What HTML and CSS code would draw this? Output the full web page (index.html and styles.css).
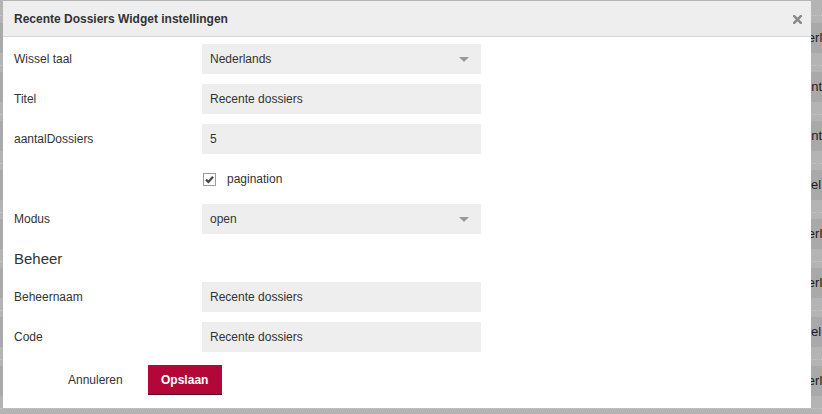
FILE: index.html
```html
<!DOCTYPE html>
<html lang="nl">
<head>
<meta charset="utf-8">
<title>Recente Dossiers Widget instellingen</title>
<link rel="stylesheet" href="styles.css">
</head>
<body>
<div class="backdrop">
  <div class="bg-top"></div>
  <div class="bg-row"><div class="bg-cell">Nederlands</div><div class="bg-sep"></div></div>
  <div class="bg-row"><div class="bg-cell alt">Recente</div><div class="bg-sep"></div></div>
  <div class="bg-row"><div class="bg-cell alt">Recente</div><div class="bg-sep"></div></div>
  <div class="bg-row"><div class="bg-cell alt3">Titel</div><div class="bg-sep"></div></div>
  <div class="bg-row"><div class="bg-cell">Nederlands</div><div class="bg-sep"></div></div>
  <div class="bg-row"><div class="bg-cell">Nederlands</div><div class="bg-sep"></div></div>
  <div class="bg-row"><div class="bg-cell alt3">Titel</div><div class="bg-sep"></div></div>
  <div class="bg-row"><div class="bg-cell">Nederlands</div><div class="bg-sep"></div></div>
</div>

<div class="modal">
  <div class="modal-header">
    <h4 class="modal-title">Recente Dossiers Widget instellingen</h4>
    <button class="close" type="button" aria-label="Sluiten">
      <svg width="9" height="9" viewBox="0 0 9 9"><path d="M1.2 1.2 L7.8 7.8 M7.8 1.2 L1.2 7.8" stroke="#8a8a8a" stroke-width="2.6" stroke-linecap="square"/></svg>
    </button>
  </div>
  <div class="modal-body">
    <div class="form-row">
      <label class="form-label">Wissel taal</label>
      <div class="field select"><span>Nederlands</span><i class="caret"></i></div>
    </div>
    <div class="form-row">
      <label class="form-label">Titel</label>
      <div class="field"><span>Recente dossiers</span></div>
    </div>
    <div class="form-row">
      <label class="form-label">aantalDossiers</label>
      <div class="field"><span>5</span></div>
    </div>
    <div class="form-row">
      <span class="form-label"></span>
      <label class="check">
        <span class="checkbox">
          <svg width="11" height="11" viewBox="0 0 11 11"><path d="M2 5.6 L4.4 8 L9 2.8" fill="none" stroke="#444" stroke-width="2.2"/></svg>
        </span>
        <span>pagination</span>
      </label>
    </div>
    <div class="form-row">
      <label class="form-label">Modus</label>
      <div class="field select"><span>open</span><i class="caret"></i></div>
    </div>
    <h3 class="section-title">Beheer</h3>
    <div class="form-row">
      <label class="form-label">Beheernaam</label>
      <div class="field"><span>Recente dossiers</span></div>
    </div>
    <div class="form-row">
      <label class="form-label">Code</label>
      <div class="field"><span>Recente dossiers</span></div>
    </div>
    <div class="actions">
      <button class="btn btn-link" type="button">Annuleren</button>
      <button class="btn btn-primary" type="button">Opslaan</button>
    </div>
  </div>
</div>
</body>
</html>
```

FILE: styles.css
```css
* { box-sizing: border-box; }

html, body {
  margin: 0;
  padding: 0;
}

body {
  width: 822px;
  height: 414px;
  overflow: hidden;
  background: #b3b3b3;
  font-family: "Liberation Sans", Arial, sans-serif;
  font-size: 12px;
  color: #333;
  position: relative;
}

/* background page (dimmed) */
.backdrop {
  display: flex;
  flex-direction: column;
  width: 822px;
}

.bg-top {
  height: 23px;
  background: #b4b4b4;
}
.bg-top::after {
  content: "";
  display: block;
  padding-top: 15px;
  border-bottom: 1px dotted #c4c4c4;
}

.bg-row {
  display: flex;
  flex-direction: column;
}

.bg-cell {
  height: 30px;
  line-height: 30px;
  background: #a9a9a9;
  color: #1e1e1e;
  font-size: 13px;
  white-space: nowrap;
  overflow: hidden;
  padding-left: 784px;
}
.bg-cell.alt { padding-left: 781px; }
.bg-cell.alt3 { padding-left: 797px; }

.bg-sep {
  height: 19px;
  background: #b4b4b4;
  padding-top: 12px;
}
.bg-sep::after {
  content: "";
  display: block;
  border-top: 1px dotted #c4c4c4;
}

/* modal */
.modal {
  position: absolute;
  left: 3px;
  top: 1px;
  width: 808px;
  height: 407px;
  background: #fff;
  display: flex;
  flex-direction: column;
}

.modal-header {
  height: 36px;
  background: #eeeeee;
  border-bottom: 1px solid #d6d6de;
  display: flex;
  align-items: center;
  justify-content: space-between;
  padding: 0 9px 0 11px;
}

.modal-title {
  margin: 0;
  font-size: 12px;
  font-weight: bold;
  color: #333;
}

.close {
  border: 0;
  background: none;
  padding: 0;
  margin-top: 2px;
  width: 9px;
  height: 9px;
  display: flex;
}

.modal-body {
  padding: 7px 0 0 11px;
  display: flex;
  flex-direction: column;
  gap: 10px;
}

.form-row {
  display: flex;
  align-items: center;
  height: 30px;
}

.form-label {
  width: 188px;
  flex: none;
}

.field {
  width: 279px;
  height: 30px;
  background: #eeeeee;
  display: flex;
  align-items: center;
  justify-content: space-between;
  padding: 0 12px 0 8px;
  color: #333;
}

.caret {
  width: 0;
  height: 0;
  border-left: 5px solid transparent;
  border-right: 5px solid transparent;
  border-top: 5px solid #9a9a9a;
  margin-top: 1px;
}

.check {
  display: flex;
  align-items: center;
  gap: 11px;
  margin-left: 1px;
}

.checkbox {
  width: 13px;
  height: 13px;
  border: 1px solid #9c9c9c;
  background: #fff;
  display: flex;
  align-items: center;
  justify-content: center;
}

.section-title {
  margin: 0;
  height: 28px;
  display: flex;
  align-items: center;
  font-size: 15px;
  font-weight: normal;
  color: #333;
}

.actions {
  display: flex;
  gap: 12px;
  margin-top: 3px;
  padding-left: 41px;
}

.btn {
  font-family: "Liberation Sans", Arial, sans-serif;
  font-size: 12px;
  height: 30px;
  border: 0;
  padding: 0 13px;
  cursor: pointer;
}

.btn-link {
  background: transparent;
  color: #333;
}

.btn-primary {
  background: #b3073a;
  color: #fff;
  font-weight: bold;
  width: 74px;
  border-bottom: 1px solid #5a0a20;
}
```
